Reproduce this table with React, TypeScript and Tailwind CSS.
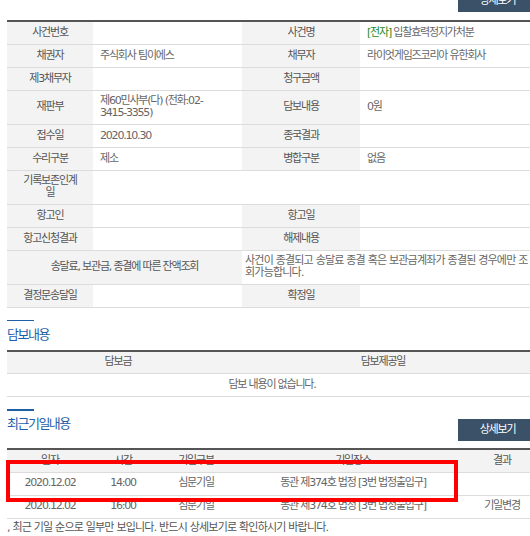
import React from "react";

const font = "font-['DejaVu_Sans','Noto_Sans_CJK_KR',sans-serif] text-[11px] tracking-[-1.2px]";
const label = "bg-[#f3f3f3] px-[4px] text-center text-[#555] leading-[12px]";
const value = "pl-[7px] pr-[4px] text-left text-[#666] leading-[12px]";
const line = "border-b border-[#dcdcdc]";

interface Schedule {
  date: string;
  time: string;
  kind: string;
  place: string;
  result: string;
}

const schedules: Schedule[] = [
  { date: "2020.12.02", time: "14:00", kind: "심문기일", place: "동관 제374호 법정 [3번 법정출입구]", result: "" },
  { date: "2020.12.02", time: "16:00", kind: "심문기일", place: "동관 제374호 법정 [3번 법정출입구]", result: "기일변경" }
];

function DetailButton({ className = "" }: { className?: string }) {
  return (
    <button className={`h-[22px] w-[79px] bg-[#3b5167] text-[11px] text-white ${className}`}>
      상세보기
    </button>
  );
}

export default function App() {
  return (
    <div className={`w-[530px] h-[536px] overflow-hidden bg-white ${font}`}>
      <div className="ml-[7px] w-[530px]">
        {/* 사건 기본내용 */}
        <div className="flex justify-end">
          <DetailButton className="-mt-[10px]" />
        </div>

        <table className="mt-[8px] w-full table-fixed border-collapse border-t-2 border-[#555]">
          <colgroup>
            <col className="w-[86px]" />
            <col className="w-[149px]" />
            <col className="w-[118px]" />
            <col className="w-[177px]" />
          </colgroup>
          <tbody>
            <tr className={`h-[23px] ${line}`}>
              <td className={label}>사건번호</td>
              <td className={value}></td>
              <td className={label}>사건명</td>
              <td className={value}>
                <span className="text-[#228b22]">[전자]</span> 입찰효력정지가처분
              </td>
            </tr>
            <tr className={`h-[23px] ${line}`}>
              <td className={label}>채권자</td>
              <td className={value}>주식회사 팀이에스</td>
              <td className={label}>채무자</td>
              <td className={value}>라이엇게임즈코리아 유한회사</td>
            </tr>
            <tr className={`h-[23px] ${line}`}>
              <td className={label}>제3채무자</td>
              <td className={value}></td>
              <td className={label}>청구금액</td>
              <td className={value}></td>
            </tr>
            <tr className={`h-[34px] ${line}`}>
              <td className={label}>재판부</td>
              <td className={value}>
                제60민사부(다) (전화:02-
                <br />
                3415-3355)
              </td>
              <td className={label}>담보내용</td>
              <td className={value}>0원</td>
            </tr>
            <tr className={`h-[23px] ${line}`}>
              <td className={label}>접수일</td>
              <td className={value}>2020.10.30</td>
              <td className={label}>종국결과</td>
              <td className={value}></td>
            </tr>
            <tr className={`h-[23px] ${line}`}>
              <td className={label}>수리구분</td>
              <td className={value}>제소</td>
              <td className={label}>병합구분</td>
              <td className={value}>없음</td>
            </tr>
            <tr className={`h-[34px] ${line}`}>
              <td className={label}>
                기록보존인계
                <br />
                일
              </td>
              <td className={value}></td>
              <td className="bg-white"></td>
              <td className={value}></td>
            </tr>
            <tr className={`h-[23px] ${line}`}>
              <td className={label}>항고인</td>
              <td className={value}></td>
              <td className={label}>항고일</td>
              <td className={value}></td>
            </tr>
            <tr className={`h-[23px] ${line}`}>
              <td className={label}>항고신청결과</td>
              <td className={value}></td>
              <td className={label}>해제내용</td>
              <td className={value}></td>
            </tr>
            <tr className={`h-[34px] ${line}`}>
              <td colSpan={2} className={label}>
                송달료, 보관금, 종결에 따른 잔액조회
              </td>
              <td colSpan={2} className="pl-[3px] pr-[6px] text-left leading-[12px] tracking-[-0.8px] text-[#666]">
                사건이 종결되고 송달료 종결 혹은 보관금계좌가 종결된 경우에만 조회가능합니다.
              </td>
            </tr>
            <tr className={`h-[23px] ${line}`}>
              <td className={label}>결정문송달일</td>
              <td className={value}></td>
              <td className={label}>확정일</td>
              <td className={value}></td>
            </tr>
          </tbody>
        </table>

        {/* 담보내용 */}
        <div className="mt-[12px] h-[1px] w-[27px] bg-[#1e5fa8]"></div>
        <h3 className="flex h-[29px] items-center text-[13px] tracking-[-1.5px] text-[#1e5fa8]">담보내용</h3>
        <table className="w-full table-fixed border-collapse border-t-2 border-[#555] text-center text-[#666]">
          <colgroup>
            <col className="w-[222px]" />
            <col className="w-[308px]" />
          </colgroup>
          <thead>
            <tr className={`h-[23px] bg-[#f3f3f3] ${line}`}>
              <th className="font-normal text-[#555]">담보금</th>
              <th className="font-normal text-[#555]">담보제공일</th>
            </tr>
          </thead>
          <tbody>
            <tr className={`h-[23px] ${line}`}>
              <td colSpan={2}>담보 내용이 없습니다.</td>
            </tr>
          </tbody>
        </table>

        {/* 최근기일내용 */}
        <div className="mt-[12px] h-[2px] w-[27px] bg-[#1e5fa8]"></div>
        <div className="flex items-start justify-between">
          <h3 className="flex h-[25px] items-center text-[13px] tracking-[-1.5px] text-[#1e5fa8]">최근기일내용</h3>
          <DetailButton className="mt-[8px]" />
        </div>
        <div className="relative mt-[7px]">
          <table className="w-full table-fixed border-collapse border-t-2 border-[#555] text-center text-[#666]">
            <colgroup>
              <col className="w-[86px]" />
              <col className="w-[60px]" />
              <col className="w-[86px]" />
              <col className="w-[228px]" />
              <col className="w-[70px]" />
            </colgroup>
            <thead>
              <tr className={`h-[23px] bg-[#f3f3f3] ${line}`}>
                <th className="font-normal text-[#555]">일자</th>
                <th className="font-normal text-[#555]">시간</th>
                <th className="font-normal text-[#555]">기일구분</th>
                <th className="font-normal text-[#555]">기일장소</th>
                <th className="font-normal text-[#555]">결과</th>
              </tr>
            </thead>
            <tbody>
              {schedules.map((s, i) => (
                <tr key={i} className={`h-[23px] ${line}`}>
                  <td>{s.date}</td>
                  <td>{s.time}</td>
                  <td>{s.kind}</td>
                  <td>{s.place}</td>
                  <td>{s.result}</td>
                </tr>
              ))}
            </tbody>
          </table>
          {/* 강조 표시 */}
          <div className="absolute left-[-1px] top-[12px] h-[42px] w-[452px] border-[4px] border-[#f00]"></div>
        </div>
        <p className="mt-[2px] leading-[14px] tracking-[-0.8px] text-[#555]">, 최근 기일 순으로 일부만 보입니다. 반드시 상세보기로 확인하시기 바랍니다.</p>
      </div>
    </div>
  );
}
